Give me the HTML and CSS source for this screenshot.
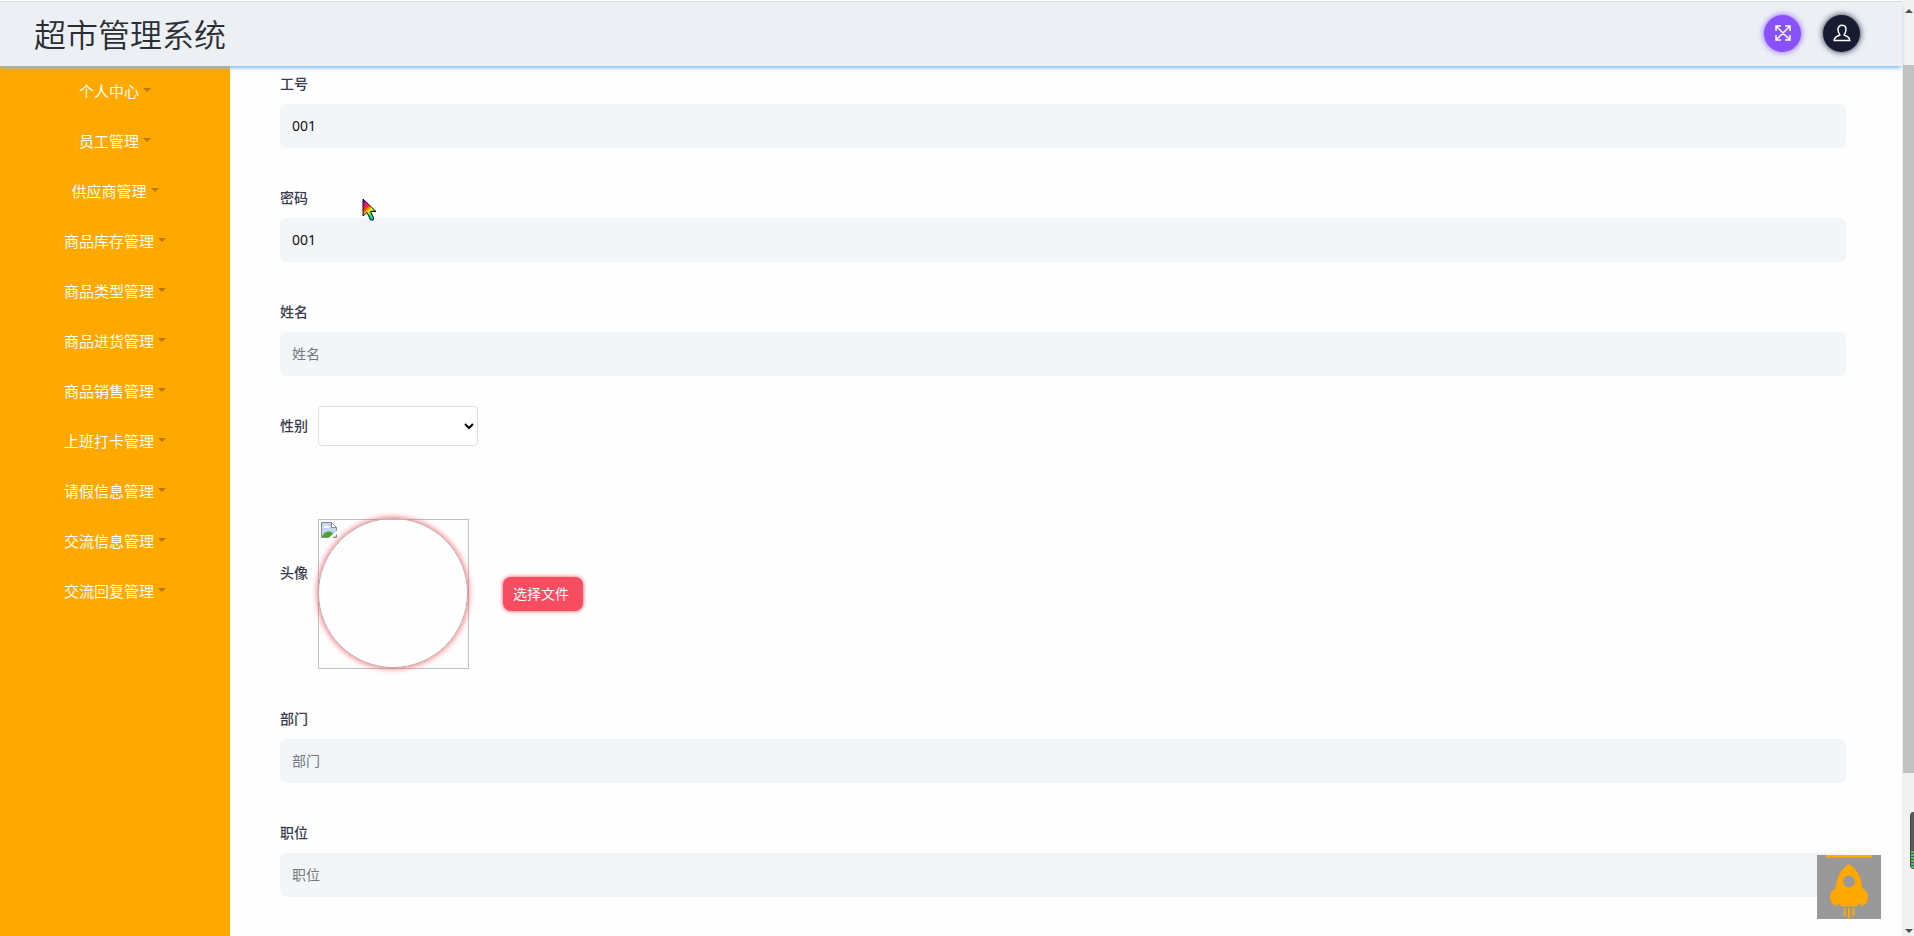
FILE: index.html
```html
<!DOCTYPE html>
<html lang="zh-CN">
<head>
<meta charset="utf-8">
<title>超市管理系统</title>
<link rel="stylesheet" href="styles.css">
</head>
<body>
<div class="app">
  <div class="page">
    <header class="header">
      <h1 class="brand">超市管理系统</h1>
      <div class="actions">
        <button class="round round-purple" type="button" aria-label="全屏">
          <svg width="18" height="18" viewBox="0 0 18 18" fill="none" stroke="#fff" stroke-width="1.5"><path d="M2 7V2h5M11 2h5v5M16 11v5h-5M7 16H2v-5M2.500 2.500l13 13M15.500 2.500l-13 13"/></svg>
        </button>
        <button class="round round-dark" type="button" aria-label="用户">
          <svg width="18" height="18" viewBox="0 0 18 18" fill="none" stroke="#fff" stroke-width="1.500"><path d="M6.700 10.500C5.500 9 5 7.200 5 5.300 5 3 6.500 1.300 9 1.300s4 1.700 4 4c0 1.900-.5 3.700-1.700 5.200v.8c2.800.7 5.200 1.800 5.500 5.200H1.200c.3-3.400 2.700-4.500 5.500-5.200z"/></svg>
        </button>
      </div>
    </header>
    <div class="body">
      <nav class="sidebar">
        <a class="item" href="#">个人中心<span class="caret"></span></a>
        <a class="item" href="#">员工管理<span class="caret"></span></a>
        <a class="item" href="#">供应商管理<span class="caret"></span></a>
        <a class="item" href="#">商品库存管理<span class="caret"></span></a>
        <a class="item" href="#">商品类型管理<span class="caret"></span></a>
        <a class="item" href="#">商品进货管理<span class="caret"></span></a>
        <a class="item" href="#">商品销售管理<span class="caret"></span></a>
        <a class="item" href="#">上班打卡管理<span class="caret"></span></a>
        <a class="item" href="#">请假信息管理<span class="caret"></span></a>
        <a class="item" href="#">交流信息管理<span class="caret"></span></a>
        <a class="item" href="#">交流回复管理<span class="caret"></span></a>
      </nav>
      <main class="main">
        <form class="form">
          <div class="field"><label class="label" for="no">工号</label><input class="input" id="no" type="text" value="001"></div>
          <div class="field"><label class="label" for="pwd">密码</label><input class="input" id="pwd" type="text" value="001"></div>
          <div class="field"><label class="label" for="name">姓名</label><input class="input" id="name" type="text" placeholder="姓名"></div>
          <div class="row row-sex"><label class="label" for="sex">性别</label><select class="select" id="sex"><option></option></select></div>
          <div class="row row-avatar">
            <label class="label label-avatar" for="file">头像</label>
            <div class="avatar">
              <svg class="broken" width="16" height="16" viewBox="0 0 16 16"><path d="M.5.500h10l5 5v10H.5z" fill="#c3d3f3" stroke="#8b8b8b"/><path d="M10.500.500v5h5z" fill="#fff" stroke="#8b8b8b"/><path d="M2.500 6a1.500 1.500 0 0 1 1.500-2 2 2 0 0 1 3 0 1.500 1.500 0 0 1 1.500 2z" fill="#fff"/><path d="M1 15c1.500-4 4-5.500 7-5.500 2.500 0 5 2 6 5.500z" fill="#4ea52d"/><path d="M7.500 16L16 8.500V12l-4.500 4z" fill="#fff"/></svg>
            </div>
            <button class="file" id="file" type="button">选择文件</button>
          </div>
          <div class="field"><label class="label" for="dept">部门</label><input class="input" id="dept" type="text" placeholder="部门"></div>
          <div class="field"><label class="label" for="job">职位</label><input class="input" id="job" type="text" placeholder="职位"></div>
        </form>
      </main>
    </div>
  </div>
  <div class="scrollbar" aria-hidden="true">
    <svg class="arrow" width="8" height="4" viewBox="0 0 8 4"><path d="M4 0l4 4H0z" fill="#505050"/></svg>
    <div class="track"><div class="thumb"></div></div>
    <svg class="arrow" width="8" height="4" viewBox="0 0 8 4"><path d="M0 0h8L4 4z" fill="#505050"/></svg>
  </div>
  <div class="meter"></div>
  <button class="totop" type="button" aria-label="返回顶部">
    <svg width="64" height="64" viewBox="0 0 64 64" fill="#ffa800"><path d="M9 0h46v2.500H9z"/><path fill-rule="evenodd" d="M32 9c5 3 13 11 13 24 4 2 6 5 6 9 0 4-2 7-5 9-2-.5-3-1.500-4-3l-2 3.500H24L22 48c-1 1.500-2 2.500-4 3-3-2-5-5-5-9 0-4 2-7 6-9 0-13 8-21 13-24zm0 11.500a6 6 0 1 0 0 12 6 6 0 0 0 0-12z"/><path d="M26.500 53h2v8h-2zM31 53h2v11h-2zM35.500 53h2v8h-2z"/></svg>
  </button>
  <svg class="cursor" width="16" height="24" viewBox="0 0 16 24">
    <defs><linearGradient id="rainbow" x1="0" y1="0" x2=".6" y2="1"><stop offset="0" stop-color="#5a00d0"/><stop offset=".25" stop-color="#f000b0"/><stop offset=".42" stop-color="#ff3000"/><stop offset=".62" stop-color="#fff000"/><stop offset=".78" stop-color="#30e060"/><stop offset="1" stop-color="#00c0e0"/></linearGradient></defs>
    <path d="M1 1v17l4-3.500L8.500 22h3V19.500L8.500 13.500H14z" fill="url(#rainbow)" stroke="#111" stroke-width="1"/>
  </svg>
</div>
</body>
</html>
```
FILE: styles.css
```css
* { box-sizing: border-box; }

body {
  margin: 0;
  font-family: "Noto Sans", "Noto Sans CJK SC", sans-serif;
  font-size: 14px;
  color: #3a3a4f;
  background: #fefefe;
}

button, input, select { font: inherit; }

.app {
  position: relative;
  display: flex;
  height: 100vh;
  overflow: hidden;
}

.page {
  flex: 1;
  min-width: 0;
  display: flex;
  flex-direction: column;
  margin-top: 1px;
}

.header {
  position: relative;
  z-index: 1;
  display: flex;
  align-items: center;
  justify-content: space-between;
  height: 65px;
  flex: none;
  padding: 0 42px 2px 34px;
  background: #ecf0f5;
  border-top: 1px solid #d8dadd;
  box-shadow: 0 3px 4px -1px #7fb8f5;
}

.brand {
  margin: 0;
  padding-top: 4px;
  font-size: 32px;
  line-height: 48px;
  font-weight: 350;
  color: #2b2f33;
}

.actions { display: flex; gap: 22px; }

.round {
  display: flex;
  align-items: center;
  justify-content: center;
  width: 37px;
  height: 37px;
  padding: 0;
  border: 0;
  border-radius: 50%;
}

.round-purple { background: #8950fc; box-shadow: 0 0 6px #8950fc; }
.round-dark { background: #181c32; box-shadow: 0 0 6px #181c32; }

.body { flex: 1; display: flex; min-height: 0; }

.sidebar {
  width: 230px;
  flex: none;
  background: #ffa800;
}

.item {
  display: flex;
  align-items: center;
  justify-content: center;
  gap: 4px;
  height: 50px;
  padding-bottom: 2px;
  font-size: 15px;
  color: #fff;
  text-decoration: none;
}

.caret {
  border: 4px solid transparent;
  border-top-color: #b87900;
  border-bottom: 0;
}

.main { flex: 1; min-width: 0; padding: 8px 56px 0 50px; }

.form { display: flex; flex-direction: column; }

.field {
  display: flex;
  flex-direction: column;
  gap: 10px;
  margin-bottom: 40px;
}

.label {
  font-weight: 500;
  line-height: 20px;
}

.input {
  width: 100%;
  height: 44px;
  padding: 0 12px 2px;
  border: 0;
  border-radius: 6px;
  background: #f3f6f9;
  color: #111;
}

.input::placeholder { color: #74787e; opacity: 1; }

.row { display: flex; align-items: center; gap: 10px; }

.row-sex { margin: -10px 0 73px; }

.select {
  width: 160px;
  height: 40px;
  background: #fff;
  border: 1px solid #dcdfe6;
  border-radius: 4px;
}

.row-avatar { margin-bottom: 40px; }

.label-avatar { align-self: flex-start; margin-top: 44px; }

.avatar {
  position: relative;
  width: 151px;
  height: 150px;
  padding: 2px;
  border: 1px solid #c0c0c0;
}

.avatar::after {
  content: "";
  position: absolute;
  inset: -2px 0 0 -1px;
  border: 1px solid #c0a8a8;
  border-radius: 50%;
  box-shadow: 0 0 6px #f64e60;
}

.broken { display: block; }

.file {
  height: 34px;
  margin-left: 24px;
  padding: 0 14px 2px 10px;
  border: 0;
  border-radius: 8px;
  background: #f64e60;
  box-shadow: 0 0 4px #f64e60;
  color: #fff;
}

.scrollbar {
  display: flex;
  flex-direction: column;
  align-items: flex-end;
  width: 12px;
  flex: none;
  padding: 9px 0 3px;
  background: #f1f1f1;
}

.arrow { flex: none; margin-right: 1px; }

.track { flex: 1; align-self: stretch; padding: 52px 0 0 1px; }

.thumb { height: 82%; background: #c1c1c1; }

.meter {
  position: absolute;
  right: 0;
  bottom: 67px;
  width: 4px;
  height: 57px;
  border-radius: 4px 0 0 4px;
  border-left: 1px solid #444;
  background: linear-gradient(#5a5a5a 38px, transparent 38px), repeating-linear-gradient(#4fbf72 0 2px, #4a5a4e 2px 3px);
}

.totop {
  position: absolute;
  right: 33px;
  bottom: 17px;
  width: 64px;
  height: 64px;
  padding: 0;
  border: 0;
  background: #999;
}

.totop svg { display: block; }

.cursor { position: absolute; left: 362px; top: 198px; }
```
